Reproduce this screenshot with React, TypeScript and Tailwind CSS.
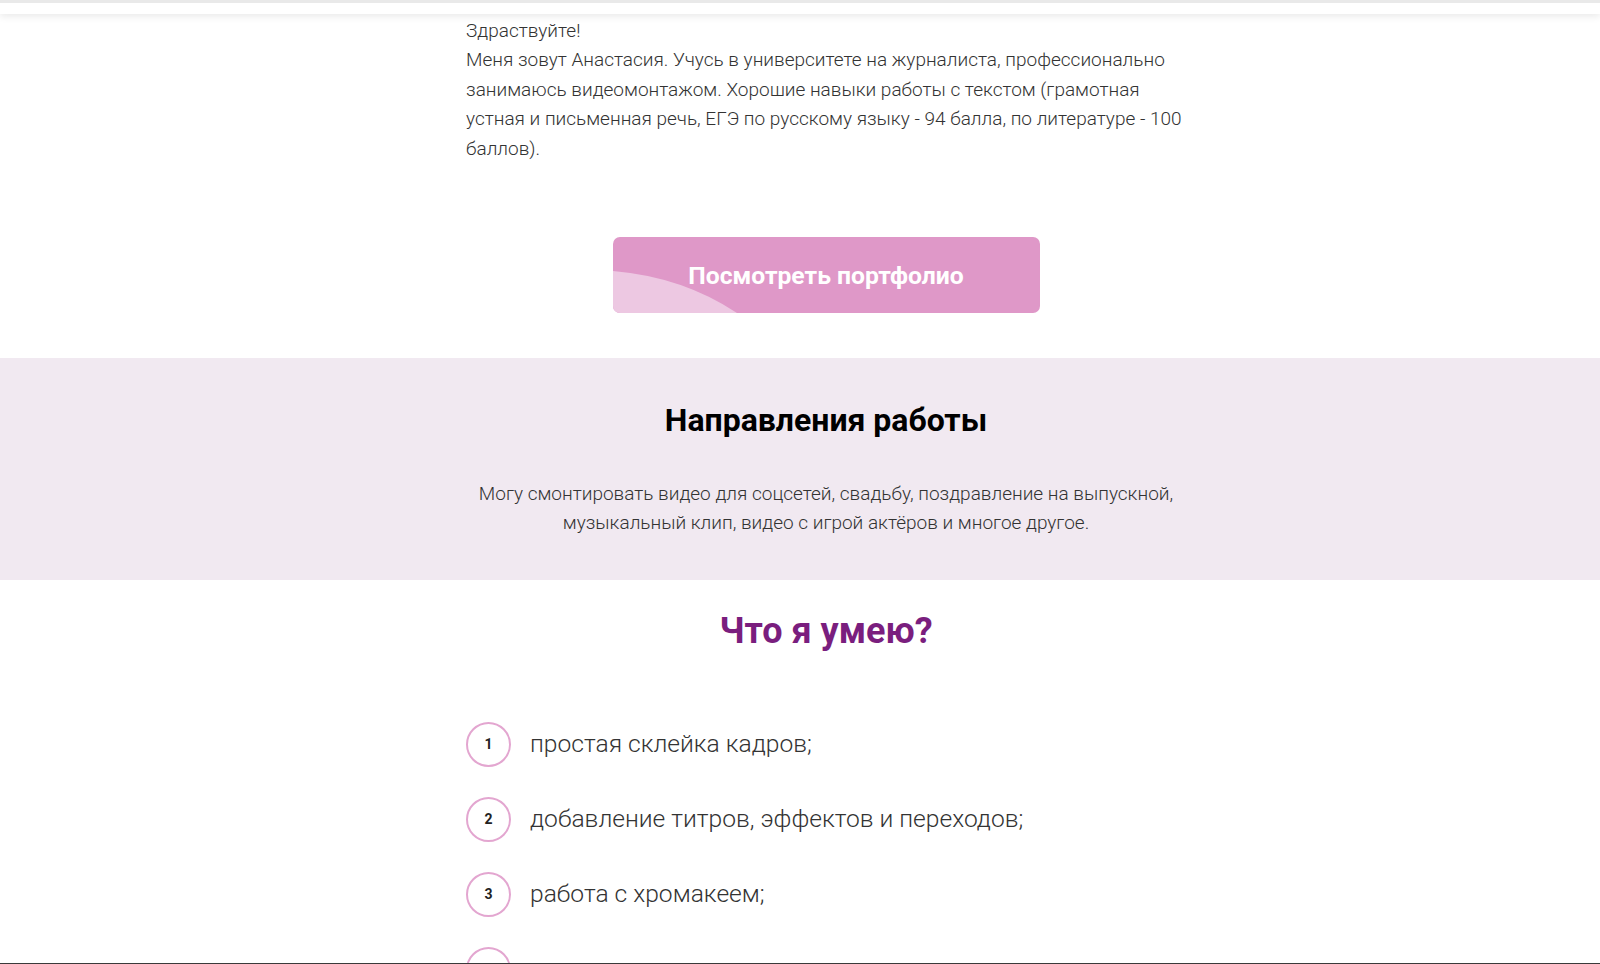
import React from "react";

const items = [
  "простая склейка кадров;",
  "добавление титров, эффектов и переходов;",
  "работа с хромакеем;",
  "цветокоррекция;",
];

export default function App() {
  return (
    <div className="min-h-screen bg-white text-[#333]" style={{ fontFamily: "Roboto, 'Noto Sans', sans-serif" }}>
      <div className="fixed top-0 left-0 right-0 h-[14px] bg-white border-t-[3px] border-[#e9e9e9] shadow-[0_3px_7px_rgba(0,0,0,0.08)] z-10" />
      <div className="pl-[52px]">
        <div className="w-[720px] mx-auto pt-[16px] text-[19px] leading-[29.4px] font-light text-[#333] whitespace-nowrap">
          Здраствуйте!
          <br />
          Меня зовут Анастасия. Учусь в университете на журналиста, профессионально
          <br />
          занимаюсь видеомонтажом. Хорошие навыки работы с текстом (грамотная
          <br />
          устная и письменная речь, ЕГЭ по русскому языку - 94 балла, по литературе - 100
          <br />
          баллов).
        </div>
        <div className="flex justify-center mt-[74px]">
          <button className="relative w-[427px] h-[76px] rounded-[7px] bg-[#DF98C8] overflow-hidden flex items-center justify-center">
            <svg className="absolute left-0 top-0" width="427" height="76" viewBox="0 0 427 76">
              <path d="M0 34 Q 70 40 124 76 L 0 76 Z" fill="#EDC8E2" />
            </svg>
            <span className="relative text-white font-bold text-[24.7px]">Посмотреть портфолио</span>
          </button>
        </div>
      </div>
      <div className="mt-[45px] bg-[#F1E9F1] h-[222px] pl-[52px]">
        <div className="w-[720px] mx-auto flex flex-col items-center pt-[44px]">
          <h2 className="text-[32px] leading-[36px] font-bold text-black">Направления работы</h2>
          <p className="mt-[41px] text-center text-[19px] leading-[29.4px] font-light text-[#333] whitespace-nowrap">
            Могу смонтировать видео для соцсетей, свадьбу, поздравление на выпускной,
            <br />
            музыкальный клип, видео с игрой актёров и многое другое.
          </p>
        </div>
      </div>
      <div className="pl-[52px]">
        <div className="w-[720px] mx-auto">
          <h2 className="mt-[29px] text-center text-[36px] leading-[44px] font-bold text-[#7A1E7E]">Что я умею?</h2>
          <ul className="mt-[69px] flex flex-col gap-[30px]">
            {items.map((t, i) => (
              <li key={i} className="flex items-center">
                <div className="w-[45px] h-[45px] rounded-full border-[2px] border-[#E3A6D0] flex items-center justify-center text-[14px] font-bold text-[#222] shrink-0">
                  {i + 1}
                </div>
                <span className="ml-[19px] text-[24.6px] font-light text-[#333]">{t}</span>
              </li>
            ))}
          </ul>
        </div>
      </div>
      <div className="fixed bottom-0 left-0 right-0 h-[1px] bg-[#3a3a3a]" />
    </div>
  );
}
